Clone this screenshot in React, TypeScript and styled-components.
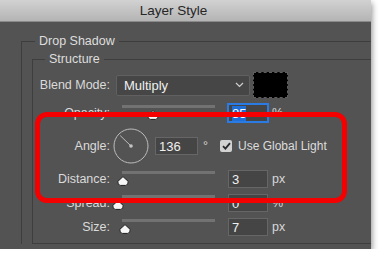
import React from 'react';
import styled, { createGlobalStyle } from 'styled-components';

const GlobalStyle = createGlobalStyle`
  html, body {
    margin: 0;
    background: #ffffff;
    font-family: "Liberation Sans", Arial, sans-serif;
  }
`;

const StyledWindow = styled.div`
  position: relative;
  width: 371px;
  height: 249px;
  background: #535353;
  box-shadow: 1px 3px 6px rgba(0, 0, 0, 0.45);
  overflow: hidden;
`;

const StyledTitleBar = styled.div`
  height: 21px;
  display: flex;
  align-items: center;
  justify-content: center;
  padding-right: 24px;
  background: linear-gradient(#d2d2d2, #b4b4b4);
  border-bottom: 1px solid #8a8a8a;
  color: #262626;
  font-size: 13.5px;
`;

const StyledBody = styled.div`
  padding: 11px 0 0 21px;
`;

const StyledGroup = styled.fieldset<{ $pad: string; $closed?: boolean }>`
  margin: 0;
  min-width: 0;
  padding: ${({ $pad }) => $pad};
  border: 1px solid #3e3e3e;
  border-right: none;
  border-bottom: ${({ $closed }) => ($closed ? '1px solid #3e3e3e' : 'none')};
`;

const StyledLegend = styled.legend<{ $offset: number }>`
  margin-left: ${({ $offset }) => `${$offset}px`};
  padding: 0 4px;
  line-height: 16px;
  font-size: 12.5px;
  color: #dedede;
`;

const StyledRow = styled.div<{ $height: number; $gapBelow?: number }>`
  display: flex;
  align-items: center;
  height: ${({ $height }) => `${$height}px`};
  margin-bottom: ${({ $gapBelow }) => `${$gapBelow || 0}px`};
`;

const StyledLabel = styled.div`
  width: 77px;
  text-align: right;
  font-size: 12.5px;
  color: #dadada;
`;

const StyledSelect = styled.div`
  display: flex;
  align-items: center;
  justify-content: space-between;
  box-sizing: border-box;
  width: 134px;
  height: 21px;
  margin-left: 6px;
  padding: 0 5px 0 7px;
  background: #464646;
  border: 1px solid #606060;
  border-radius: 2px;
  font-size: 13px;
  color: #f0f0f0;
`;

const StyledSwatch = styled.div`
  box-sizing: border-box;
  width: 35px;
  height: 26px;
  margin-left: 3px;
  background: #000;
  border: 1px dashed #5e5e5e;
`;

const StyledSliderArea = styled.div`
  display: flex;
  flex-direction: column;
  align-self: stretch;
  width: 106px;
  margin-left: 6px;
`;

const StyledTrack = styled.div`
  height: 3px;
  margin: 4px 7px 0 6px;
  background: #727272;
`;

const StyledThumb = styled.svg<{ $pos: number }>`
  display: block;
  margin-top: 2px;
  margin-left: ${({ $pos }) => `${$pos - 6}px`};
`;

const StyledInput = styled.div<{ $width: number; $focused?: boolean }>`
  display: flex;
  align-items: center;
  box-sizing: border-box;
  width: ${({ $width }) => `${$width}px`};
  height: 18px;
  margin-left: 6px;
  padding-left: 3px;
  background: #454545;
  border: 1px solid ${({ $focused }) => ($focused ? '#2b7be4' : '#666666')};
  box-shadow: ${({ $focused }) => ($focused ? '0 0 0 1px #2b7be4' : 'none')};
  font-size: 13px;
  color: #f0f0f0;
`;

const StyledSelection = styled.span`
  background: #1f6fd8;
  color: #ffffff;
`;

const StyledUnit = styled.span<{ $gap: number }>`
  margin-left: ${({ $gap }) => `${$gap}px`};
  font-size: 12.5px;
  color: #d8d8d8;
`;

const StyledDial = styled.svg`
  display: block;
  margin-left: 3px;
`;

const StyledCheckbox = styled.span`
  display: flex;
  align-items: center;
  justify-content: center;
  width: 12px;
  height: 12px;
  margin-left: 12px;
  background: #d2d2d2;
  border-radius: 2px;
`;

const StyledCheckText = styled.span`
  margin-left: 6px;
  font-size: 12px;
  color: #dcdcdc;
`;

const StyledHighlight = styled.div`
  position: absolute;
  left: 35px;
  top: 112px;
  width: 312px;
  height: 91px;
  box-sizing: border-box;
  border: 5px solid #f40000;
  border-radius: 12px;
  pointer-events: none;
`;

const SLIDERS = [
  { label: 'Opacity:', value: '85', unit: '%', pos: 37, focused: true },
  { label: 'Distance:', value: '3', unit: 'px', pos: 7 },
  { label: 'Spread:', value: '0', unit: '%', pos: 2 },
  { label: 'Size:', value: '7', unit: 'px', pos: 9 },
];

function SliderRow({
  label,
  value,
  unit,
  pos,
  focused,
}: {
  label: string;
  value: string;
  unit: string;
  pos: number;
  focused?: boolean;
}) {
  return (
    <StyledRow $height={24}>
      <StyledLabel>{label}</StyledLabel>
      <StyledSliderArea>
        <StyledTrack />
        <StyledThumb $pos={pos} width="12" height="10" viewBox="0 0 12 10">
          <path
            d="M6 0.6 L11.2 5.4 Q11.4 9.4 8.6 9.4 L3.4 9.4 Q0.6 9.4 0.8 5.4 Z"
            fill="#f6f6f6"
            stroke="#1c1c1c"
            strokeWidth="1"
            strokeLinejoin="round"
          />
        </StyledThumb>
      </StyledSliderArea>
      <StyledInput $width={40} $focused={focused}>
        {focused ? <StyledSelection>{value}</StyledSelection> : value}
      </StyledInput>
      <StyledUnit $gap={4}>{unit}</StyledUnit>
    </StyledRow>
  );
}

function AngleRow() {
  const rad = (136 * Math.PI) / 180;
  const x2 = 18 + Math.cos(rad) * 15;
  const y2 = 18 - Math.sin(rad) * 15;

  return (
    <StyledRow $height={42}>
      <StyledLabel>Angle:</StyledLabel>
      <StyledDial width="36" height="36" viewBox="0 0 36 36">
        <circle cx="18" cy="18" r="17" fill="none" stroke="#bcbcbc" strokeWidth="1" />
        <line x1="18" y1="18" x2={x2} y2={y2} stroke="#bcbcbc" strokeWidth="1" />
        <circle cx="18" cy="18" r="1.8" fill="#c4c4c4" />
      </StyledDial>
      <StyledInput $width={43}>136</StyledInput>
      <StyledUnit $gap={5}>°</StyledUnit>
      <StyledCheckbox>
        <svg width="9" height="8" viewBox="0 0 9 8">
          <path d="M1 4.2 L3.4 6.6 L8 1.2" fill="none" stroke="#2a2a2a" strokeWidth="1.8" />
        </svg>
      </StyledCheckbox>
      <StyledCheckText>Use Global Light</StyledCheckText>
    </StyledRow>
  );
}

function App() {
  const [opacity, ...rest] = SLIDERS;

  return (
    <>
      <GlobalStyle />
      <StyledWindow>
        <StyledTitleBar>Layer Style</StyledTitleBar>
        <StyledBody>
          <StyledGroup $pad="2px 0 0 10px">
            <StyledLegend $offset={3}>Drop Shadow</StyledLegend>
            <StyledGroup $pad="5px 0 4px 0" $closed>
              <StyledLegend $offset={12}>Structure</StyledLegend>

              <StyledRow $height={26} $gapBelow={3}>
                <StyledLabel>Blend Mode:</StyledLabel>
                <StyledSelect>
                  Multiply
                  <svg width="9" height="6" viewBox="0 0 9 6">
                    <path d="M1 1 L4.5 4.5 L8 1" fill="none" stroke="#cfcfcf" strokeWidth="1.2" />
                  </svg>
                </StyledSelect>
                <StyledSwatch />
              </StyledRow>

              <SliderRow {...opacity} />
              <AngleRow />
              {rest.map((item) => (
                <SliderRow key={item.label} {...item} />
              ))}
            </StyledGroup>
          </StyledGroup>
        </StyledBody>
        <StyledHighlight />
      </StyledWindow>
    </>
  );
}

export default App;
